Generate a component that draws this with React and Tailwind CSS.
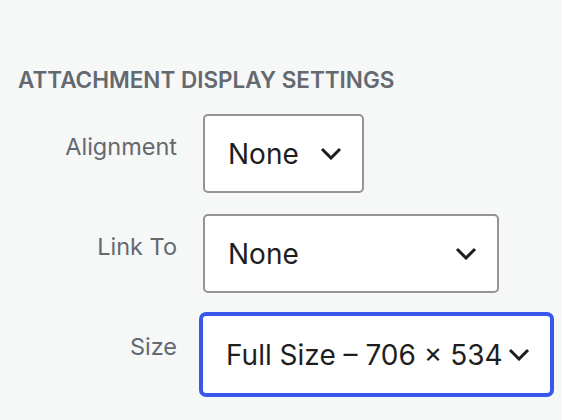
import { ChevronDown } from "lucide-react";

const ROWS = [
  { label: "Alignment", value: "None", width: "w-[161px]" },
  { label: "Link To", value: "None", width: "w-[296px]" },
  { label: "Size", value: "Full Size – 706 × 534", width: "w-[351px]", focused: true },
];

function Chevron() {
  return (
    <svg width="22" height="13" viewBox="0 0 22 13" fill="none" className="shrink-0">
      <path d="M2 2l9 9 9-9" stroke="#1e1e1e" strokeWidth="3" />
    </svg>
  );
}

function SelectBox({ value, width, focused }) {
  return (
    <div
      className={`flex items-center justify-between bg-white rounded-[5px] pl-[23px] pr-[20px] ${width} ${
        focused
          ? "h-[81px] -ml-[2px] border-2 border-[#3858e9] shadow-[0_0_0_2px_#3858e9]"
          : "h-[79px] border-2 border-[#949494]"
      }`}
    >
      <span className="text-[28px] text-[#1e1e1e] whitespace-nowrap">{value}</span>
      <Chevron />
    </div>
  );
}

export default function App() {
  return (
    <div className="min-h-[420px] bg-[#f6f7f7] pl-[18px] pt-[64px] font-['Inter',sans-serif]">
      <h2 className="text-[22.5px] font-semibold uppercase text-[#646970] leading-[32px]">
        Attachment Display Settings
      </h2>

      <div className="mt-[18px] flex flex-col gap-[21px]">
        {ROWS.map((row) => (
          <div key={row.label} className="flex items-start gap-[26px]">
            <div className="w-[159px] pt-[17px] text-right text-[23.5px] leading-[32px] text-[#646970]">
              {row.label}
            </div>
            <SelectBox value={row.value} width={row.width} focused={row.focused} />
          </div>
        ))}
      </div>
    </div>
  );
}
